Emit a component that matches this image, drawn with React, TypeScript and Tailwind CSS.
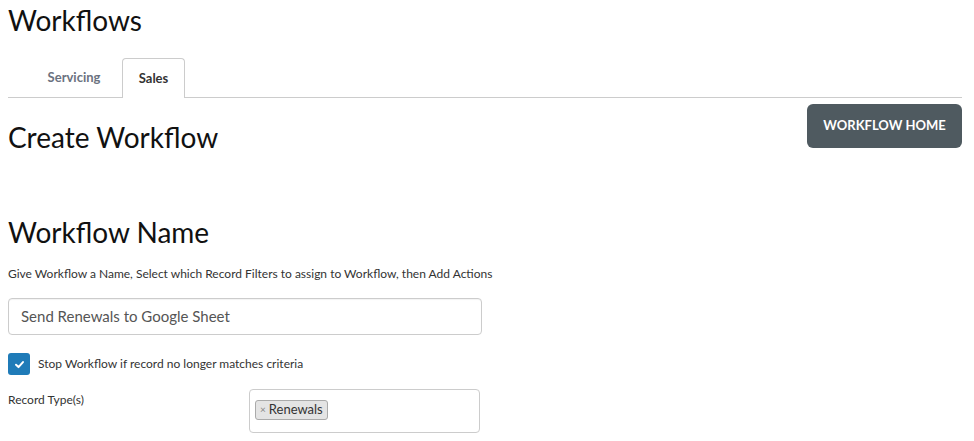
import React from "react";

const font = { fontFamily: '"Lato", "Liberation Sans", sans-serif' };

export default function App() {
  return (
    <div className="bg-white min-h-[441px] pl-[8px] pr-[12px] text-[#222]" style={font}>
      <h1 className="pt-[3px] text-[28px] leading-[34px] font-normal text-[#111]">Workflows</h1>

      {/* tabs */}
      <div className="mt-[21px] flex border-b border-[#ccc] pl-[22px]">
        <div className="h-[39px] w-[88px] mr-[4px] flex items-center justify-center text-[13px] font-bold text-[#6b7280]">
          Servicing
        </div>
        <div className="h-[40px] -mb-px w-[63px] flex items-center justify-center rounded-t-[4px] border border-b-0 border-[#ccc] bg-white text-[13px] font-bold text-[#333]">
          Sales
        </div>
      </div>

      <div className="flex items-start justify-between">
        <h2 className="mt-[22px] text-[28px] leading-[34px] font-normal text-[#111]">Create Workflow</h2>
        <button className="mt-[6px] h-[44px] w-[155px] rounded-[6px] bg-[#4f5a60] text-[13px] font-bold text-white">
          WORKFLOW HOME
        </button>
      </div>

      <h2 className="mt-[61px] text-[28px] leading-[34px] font-normal text-[#111]">Workflow Name</h2>

      <p className="mt-[17px] text-[12px] leading-[16px] text-[#333]">
        Give Workflow a Name, Select which Record Filters to assign to Workflow, then Add Actions
      </p>

      <div className="mt-[16px] flex h-[37px] w-[474px] items-center rounded-[4px] border border-[#ccc] px-[12px] text-[15px] text-[#555] shadow-[inset_0_1px_1px_rgba(0,0,0,0.05)]">
        Send Renewals to Google Sheet
      </div>

      <label className="mt-[18px] flex items-center gap-[8px]">
        <span className="flex h-[22px] w-[22px] items-center justify-center rounded-[3px] bg-[#1f7bb8]">
          <svg viewBox="0 0 12 12" className="h-[11px] w-[11px]">
            <path d="M2.2 6.3 L4.9 8.8 L9.8 3.4" fill="none" stroke="white" strokeWidth="2.2" strokeLinecap="round" strokeLinejoin="round" />
          </svg>
        </span>
        <span className="text-[12px] text-[#333]">Stop Workflow if record no longer matches criteria</span>
      </label>

      <div className="mt-[14px] flex">
        <div className="w-[241px] pt-[2px] text-[12px] text-[#333]">Record Type(s)</div>
        <div className="h-[44px] w-[231px] rounded-[4px] border border-[#ccc] px-[5px] pt-[5px]">
          <span className="inline-flex h-[20px] items-center rounded-[3px] border border-[#aaa] bg-[#e4e4e4] px-[4px] text-[13px] text-[#333]">
            <span className="mr-[3px] text-[10px] text-[#888]">×</span>Renewals
          </span>
        </div>
      </div>
    </div>
  );
}
